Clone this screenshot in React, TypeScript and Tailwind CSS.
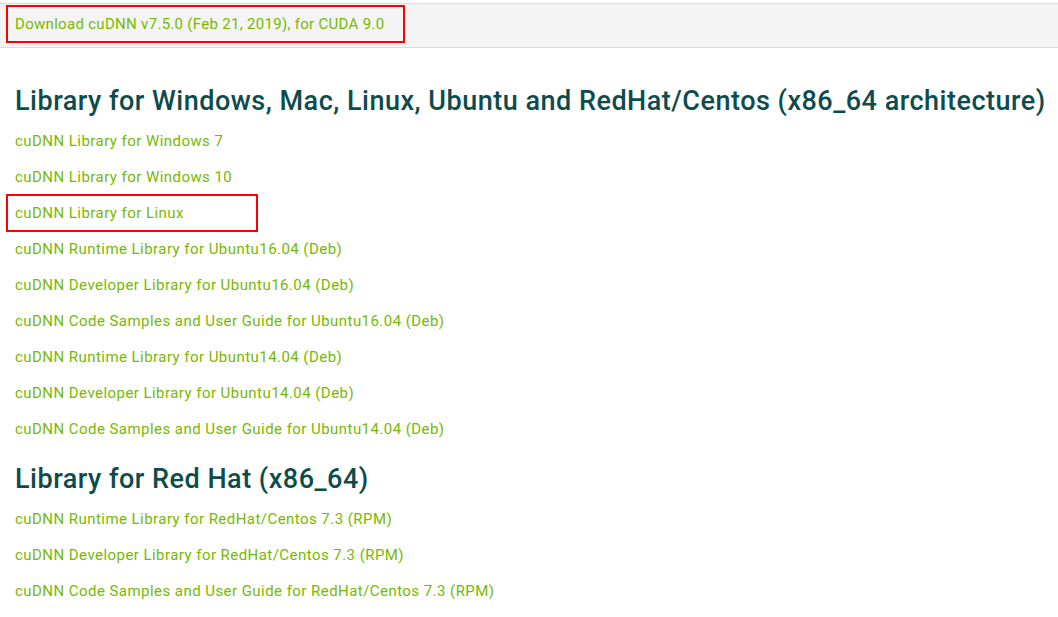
import React from "react";

const windowsLinks = [
  "cuDNN Library for Windows 7",
  "cuDNN Library for Windows 10",
  "cuDNN Library for Linux",
  "cuDNN Runtime Library for Ubuntu16.04 (Deb)",
  "cuDNN Developer Library for Ubuntu16.04 (Deb)",
  "cuDNN Code Samples and User Guide for Ubuntu16.04 (Deb)",
  "cuDNN Runtime Library for Ubuntu14.04 (Deb)",
  "cuDNN Developer Library for Ubuntu14.04 (Deb)",
  "cuDNN Code Samples and User Guide for Ubuntu14.04 (Deb)",
];

const redhatLinks = [
  "cuDNN Runtime Library for RedHat/Centos 7.3 (RPM)",
  "cuDNN Developer Library for RedHat/Centos 7.3 (RPM)",
  "cuDNN Code Samples and User Guide for RedHat/Centos 7.3 (RPM)",
];

// links that were marked up with a red box in the screenshot
const highlighted = ["cuDNN Library for Linux"];

function LinkRow({ label }: { label: string }) {
  if (highlighted.includes(label)) {
    return (
      <div className="ml-[6px] w-[252px] h-[38px] -my-px border-2 border-[#ff0000] pl-[7px] flex items-center">
        <a href="#" className="text-[15px] tracking-[0.45px] text-[#76b900] leading-none">
          {label}
        </a>
      </div>
    );
  }
  return (
    <div className="h-9 pl-[15px] flex items-center">
      <a href="#" className="text-[15px] tracking-[0.45px] text-[#76b900] leading-none">
        {label}
      </a>
    </div>
  );
}

export default function App() {
  return (
    <div
      className="min-h-screen bg-white pt-[3px]"
      style={{ fontFamily: "Roboto, 'Liberation Sans', sans-serif" }}
    >
      {/* Download bar */}
      <div className="border-t border-b border-[#dcdcdc] bg-[#f4f4f4] pt-px pb-[4px]">
        <div className="ml-[6px] w-[399px] h-[38px] border-2 border-[#ff0000] pl-[7px] flex items-center">
          <a href="#" className="text-[15px] tracking-[0.3px] text-[#76b900] leading-none">
            Download cuDNN v7.5.0 (Feb 21, 2019), for CUDA 9.0
          </a>
        </div>
      </div>

      {/* Windows / Linux section */}
      <h2 className="mt-[35px] pl-[15px] h-9 flex items-center text-[27px] tracking-[0.5px] font-medium text-[#0d4c4c] leading-none whitespace-nowrap">
        Library for Windows, Mac, Linux, Ubuntu and RedHat/Centos (x86_64 architecture)
      </h2>
      <div className="mt-1">
        {windowsLinks.map((l) => (
          <LinkRow key={l} label={l} />
        ))}
      </div>

      {/* Red Hat section */}
      <h2 className="mt-[14px] pl-[15px] h-9 flex items-center text-[27px] tracking-[0.5px] font-medium text-[#0d4c4c] leading-none">
        Library for Red Hat (x86_64)
      </h2>
      <div className="mt-1">
        {redhatLinks.map((l) => (
          <LinkRow key={l} label={l} />
        ))}
      </div>
    </div>
  );
}
